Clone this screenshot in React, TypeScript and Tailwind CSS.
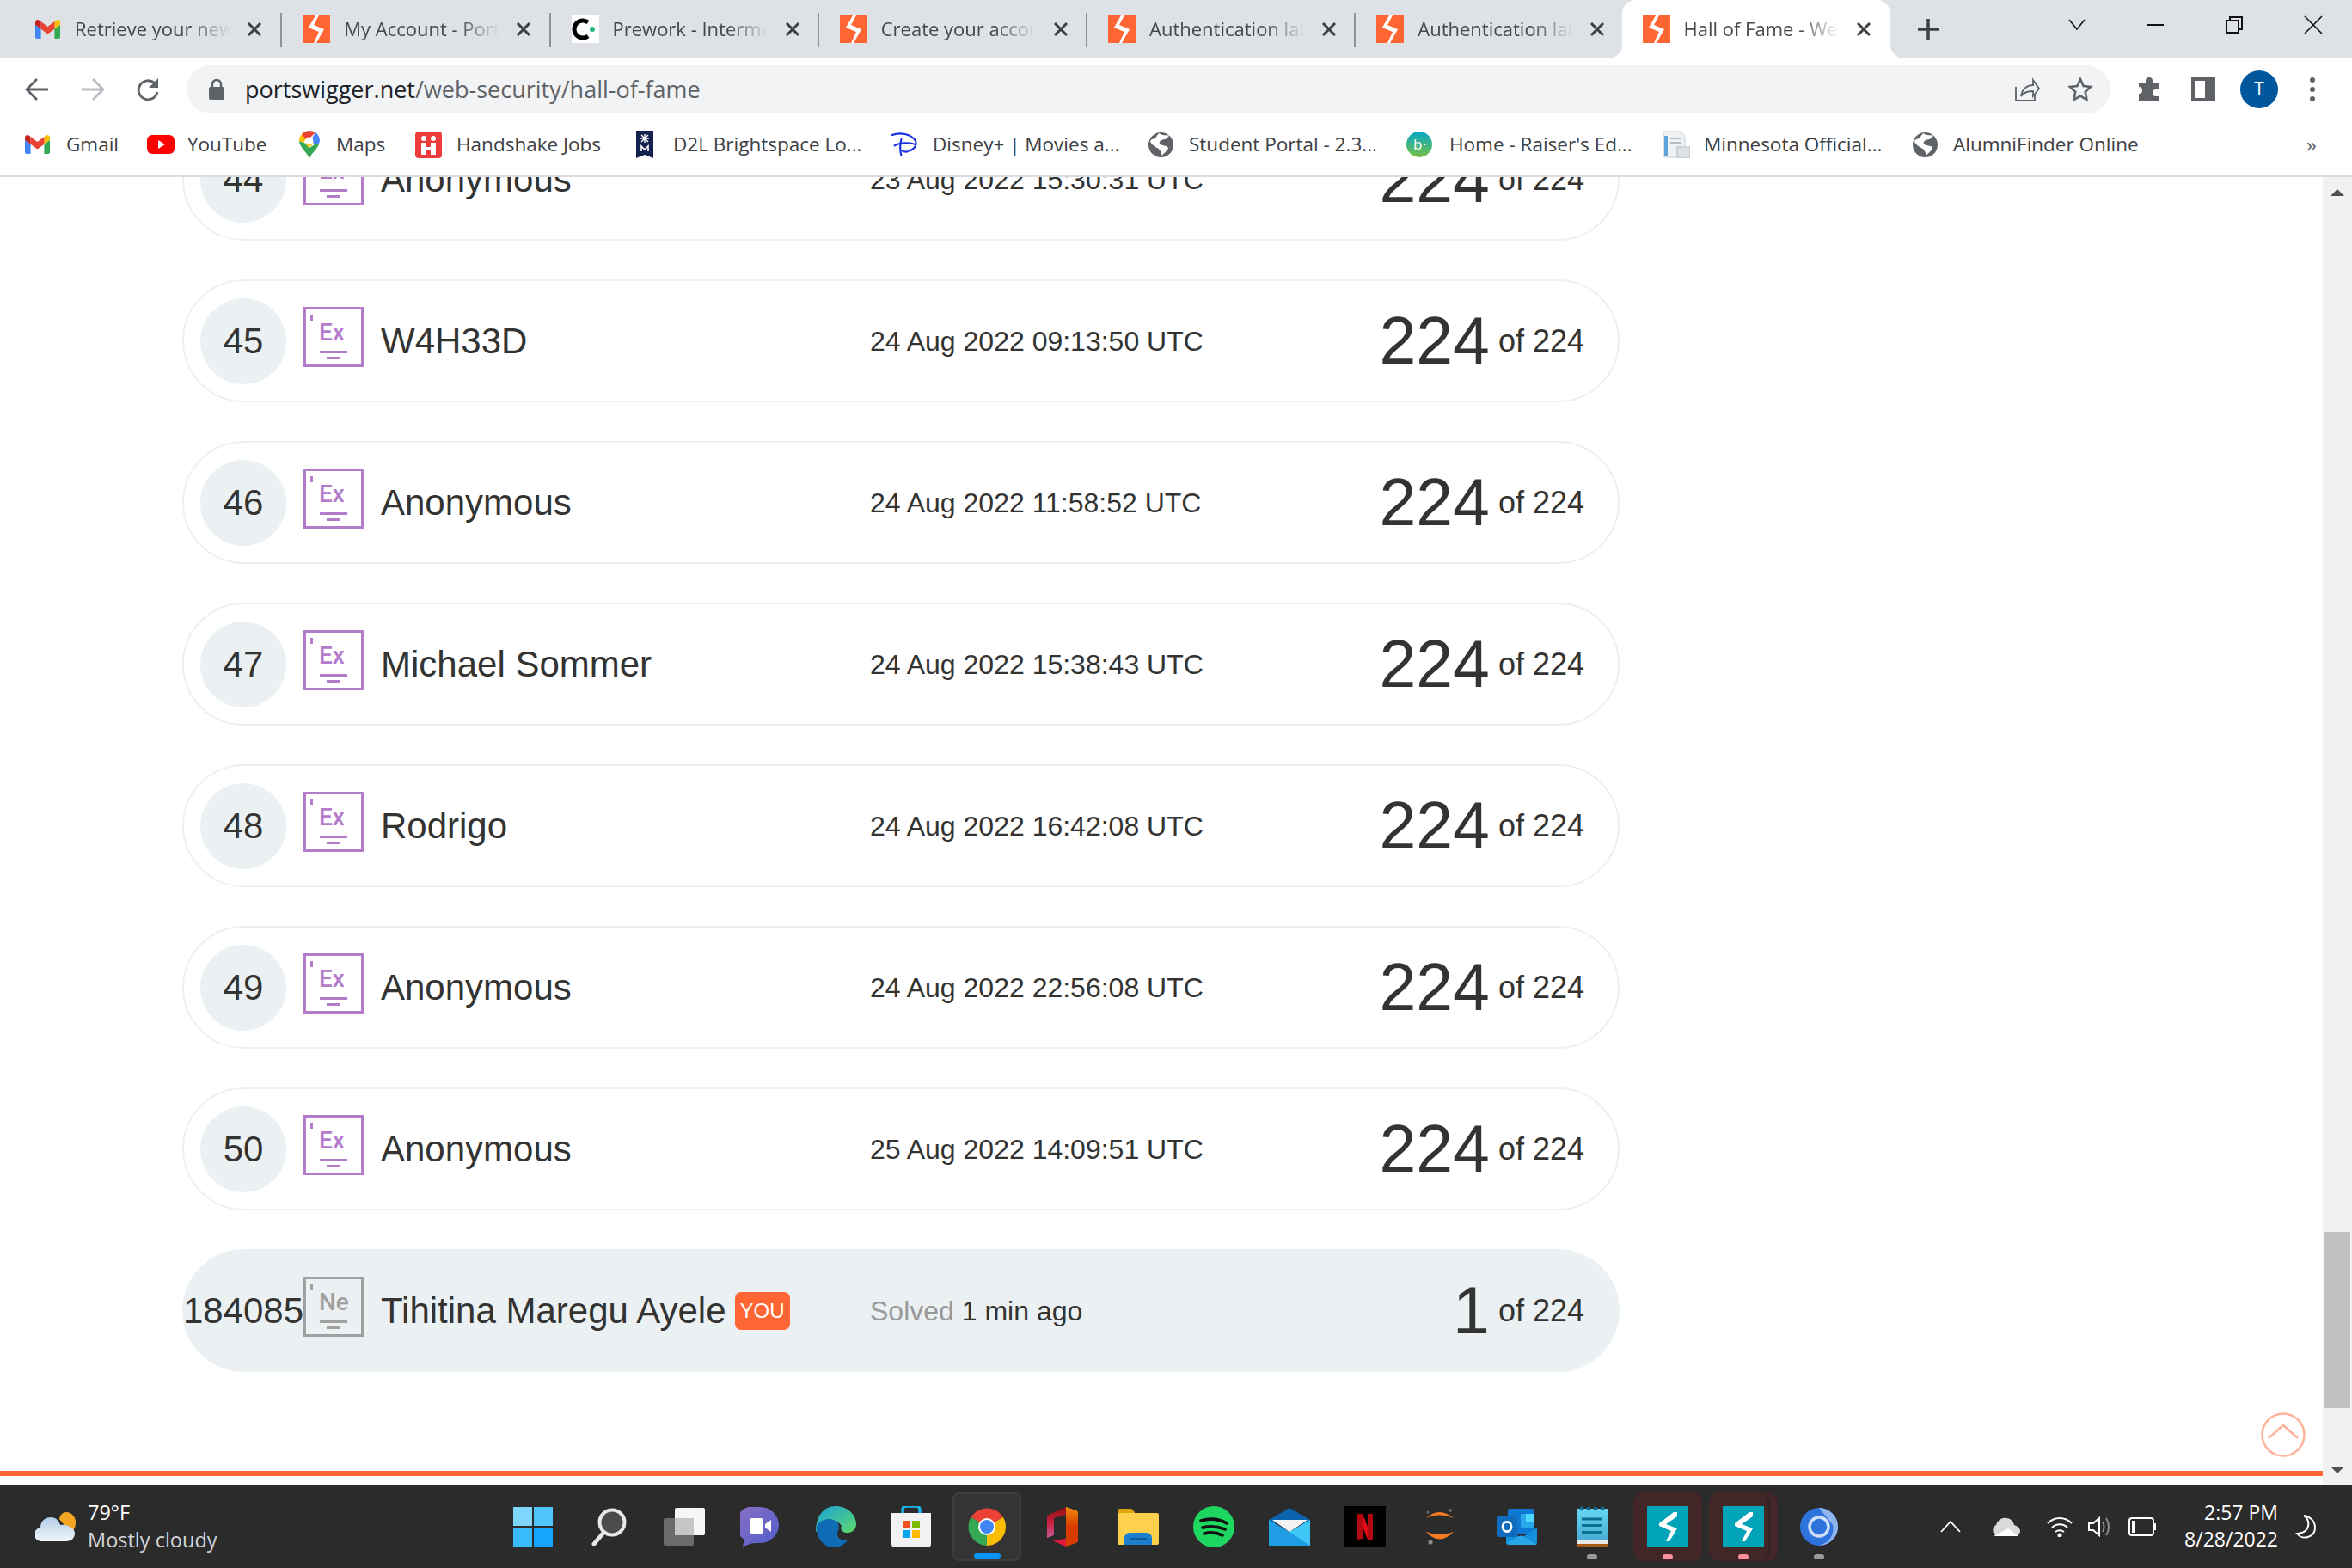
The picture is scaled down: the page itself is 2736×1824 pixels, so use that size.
import type { ReactNode } from 'react';

const uiFont = "font-['Open_Sans',sans-serif]";
const rowFont = "font-['Liberation_Sans',Arial,sans-serif]";

function BurpFavicon() {
    return (
        <svg viewBox="0 0 32 32" className="h-[32px] w-[32px] shrink-0">
            <rect width="32" height="32" fill="#ff6633" />
            <path d="M15 0h4l-6 11 12 5-9 16h-3l6-13-12-5z" fill="#fff" />
        </svg>
    );
}

function GmailLogo({ className }: { className: string }) {
    return (
        <svg viewBox="52 42 88 66" className={className}>
            <path fill="#4285f4" d="M58 108h14V74L52 59v43c0 3.32 2.69 6 6 6" />
            <path fill="#34a853" d="M120 108h14c3.32 0 6-2.69 6-6V59l-20 15" />
            <path fill="#fbbc04" d="M120 48v26l20-15v-8c0-7.42-8.47-11.65-14.4-7.2" />
            <path fill="#ea4335" d="M72 74V48l24 18 24-18v26L96 92" />
            <path fill="#c5221f" d="M52 51v8l20 15V48l-5.6-4.2c-5.94-4.45-14.4-.22-14.4 7.2" />
        </svg>
    );
}

function CourseFavicon() {
    return (
        <svg viewBox="0 0 32 32" className="h-[32px] w-[32px] shrink-0">
            <rect width="32" height="32" fill="#fff" />
            <path d="M19 8a10 10 0 1 0 0 16" fill="none" stroke="#000" strokeWidth="5" />
            <circle cx="24" cy="16" r="3" fill="#27b57c" />
        </svg>
    );
}

function Globe({ className }: { className: string }) {
    return (
        <svg viewBox="0 0 30 30" className={className}>
            <circle cx="15" cy="15" r="15" fill="#5f6368" />
            <path d="M13 1c3 3 9 2 12 3-3 3-5 6-9 6-3 0-4 3-1 5 3 1 8 1 9 4-2 4-6 7-8 9 0-4-2-7-5-9-4-2-8-5-9-9 3-3 7-5 11-9z" fill="#fff" />
            <path d="M14 11c3-3 6-3 9-2-1 3-3 5-6 5-2 0-4-1-3-3z" fill="#5f6368" />
            <path d="M4 8c2-3 4-5 7-6-1 3-3 6-7 6z" fill="#5f6368" />
        </svg>
    );
}

const bookmarks: { label: string; icon: ReactNode; width: string; textAt: string }[] = [
    { label: 'Gmail', icon: <GmailLogo className="h-[22px] w-[29px]" />, width: 'w-[142px]', textAt: 'w-[48px]' },
    {
        label: 'YouTube',
        icon: (
            <svg viewBox="0 0 32 22" className="h-[22px] w-[32px]">
                <rect width="32" height="22" rx="6" fill="#f00" />
                <path d="M13 6l8 5-8 5z" fill="#fff" />
            </svg>
        ),
        width: 'w-[177px]',
        textAt: 'w-[47px]',
    },
    {
        label: 'Maps',
        icon: (
            <svg viewBox="0 0 24 32" className="h-[32px] w-[24px]">
                <path d="M12 32C9 25 0 19 0 12l6 2 6 6 6-4 5-1c-1 6-8 10-11 17z" fill="#34a853" />
                <path d="M0 12c0-3 1-6 3-8l5 5-3 5z" fill="#fbbc04" />
                <path d="M3 4c3-3 6-4 9-4 3 0 5 1 7 2l-7 7-4 1z" fill="#ea4335" />
                <path d="M19 2c3 2 5 6 5 10l-1 3-6 1-2-7z" fill="#4285f4" />
                <path d="M7 14l10-1-3 5-4 1z" fill="#fbbc04" />
                <circle cx="12" cy="12" r="4.5" fill="#fff" />
            </svg>
        ),
        width: 'w-[135px]',
        textAt: 'w-[43px]',
    },
    {
        label: 'Handshake Jobs',
        icon: (
            <svg viewBox="0 0 31 31" className="h-[31px] w-[31px]">
                <rect width="31" height="31" rx="4" fill="#ef3b3b" />
                <circle cx="10" cy="8" r="3" fill="#fff" />
                <circle cx="21" cy="8" r="3" fill="#fff" />
                <rect x="7" y="13" width="6" height="14" fill="#fff" />
                <rect x="18" y="13" width="6" height="14" fill="#fff" />
                <rect x="12" y="18" width="8" height="3" fill="#fff" />
            </svg>
        ),
        width: 'w-[257px]',
        textAt: 'w-[48px]',
    },
    {
        label: 'D2L Brightspace Lo...',
        icon: (
            <svg viewBox="0 0 20 32" className="h-[32px] w-[20px]">
                <path d="M0 0h20v32l-10-4-10 4z" fill="#14214f" />
                <path d="M10 4v10M5 9h10M6 5l8 8M14 5l-8 8" stroke="#fff" strokeWidth="1.4" />
                <path d="M6 24v-6l4 4 4-4v6" fill="none" stroke="#fff" strokeWidth="1.6" />
            </svg>
        ),
        width: 'w-[295px]',
        textAt: 'w-[43px]',
    },
    {
        label: 'Disney+ | Movies a...',
        icon: (
            <svg viewBox="0 0 36 32" className="h-[32px] w-[35px]" fill="none" stroke="#1a2fe0" strokeWidth="2.2">
                <path d="M2 5c10-4 24-2 29 7 2 6-3 11-9 12" />
                <path d="M14 9c-2 7-2 14 0 21" />
                <path d="M5 18c6-4 18-5 26-2" />
                <path d="M14 23c3 2 5 3 8 1" />
            </svg>
        ),
        width: 'w-[301px]',
        textAt: 'w-[50px]',
    },
    { label: 'Student Portal - 2.3...', icon: <Globe className="h-[29px] w-[29px]" />, width: 'w-[300px]', textAt: 'w-[47px]' },
    {
        label: "Home - Raiser's Ed...",
        icon: (
            <svg viewBox="0 0 30 30" className="h-[30px] w-[30px]">
                <defs>
                    <linearGradient id="raiser" x1="0" y1="0" x2="0" y2="1">
                        <stop offset="0" stopColor="#05a6c9" />
                        <stop offset="1" stopColor="#78c043" />
                    </linearGradient>
                </defs>
                <circle cx="15" cy="15" r="15" fill="url(#raiser)" />
                <text x="8" y="21" fontSize="17" fill="#fff" fontFamily="Open Sans">b</text>
                <path d="M20 13l3 2-3 2z" fill="#fff" />
            </svg>
        ),
        width: 'w-[298px]',
        textAt: 'w-[50px]',
    },
    {
        label: 'Minnesota Official...',
        icon: (
            <svg viewBox="0 0 32 32" className="h-[32px] w-[32px]">
                <path d="M1 1h20l5 5v25H1z" fill="#eef1f4" stroke="#c9ced3" />
                <rect x="2" y="6" width="4" height="24" fill="#5ba5dc" />
                <rect x="9" y="8" width="12" height="2" fill="#b6bcc3" />
                <rect x="9" y="13" width="12" height="2" fill="#b6bcc3" />
                <rect x="17" y="19" width="15" height="13" fill="#dde1e5" stroke="#b6bcc3" />
            </svg>
        ),
        width: 'w-[291px]',
        textAt: 'w-[48px]',
    },
    { label: 'AlumniFinder Online', icon: <Globe className="h-[29px] w-[29px]" />, width: 'w-[300px]', textAt: 'w-[47px]' },
];

const tabs: { title: string; icon: ReactNode }[] = [
    { title: 'Retrieve your new password', icon: <GmailLogo className="h-[22px] w-[29px] shrink-0 mx-px" /> },
    { title: 'My Account - PortSwigger', icon: <BurpFavicon /> },
    { title: 'Prework - Intermediate Cyber', icon: <CourseFavicon /> },
    { title: 'Create your account', icon: <BurpFavicon /> },
    { title: 'Authentication lab', icon: <BurpFavicon /> },
    { title: 'Authentication lab', icon: <BurpFavicon /> },
];

function CloseX() {
    return (
        <svg viewBox="0 0 18 18" className="ml-[16px] h-[18px] w-[18px] shrink-0" stroke="#3c4043" strokeWidth="3">
            <path d="M2 2l14 14M16 2L2 16" />
        </svg>
    );
}

function Tab({ title, icon, active, noDivider }: { title: string; icon: ReactNode; active?: boolean; noDivider?: boolean }) {
    return (
        <div className={`relative flex h-[68px] shrink-0 items-center pl-[24px] ${active ? '-ml-[3px] w-[312px] rounded-t-[16px] bg-white' : 'w-[312.25px]'}`}>
            {active && (
                <>
                    <div className="absolute -left-[16px] bottom-0 h-[16px] w-[16px] bg-white">
                        <div className="h-full w-full rounded-br-[16px] bg-[#dee1e6]" />
                    </div>
                    <div className="absolute -right-[16px] bottom-0 h-[16px] w-[16px] bg-white">
                        <div className="h-full w-full rounded-bl-[16px] bg-[#dee1e6]" />
                    </div>
                </>
            )}
            {icon}
            <div className="ml-[16px] w-[184px] shrink-0 overflow-hidden whitespace-nowrap pb-[2px] text-[22px] text-[#45494d] [mask-image:linear-gradient(to_right,black_72%,transparent_98%)]">
                {title}
            </div>
            <CloseX />
            {!active && !noDivider && <div className="absolute right-0 top-[15px] h-[40px] w-[2px] bg-[#8f9398]" />}
        </div>
    );
}

function TopBars() {
    return (
        <div className={`${uiFont} shrink-0`}>
            <div className="flex h-[68px] items-center bg-[#dee1e6] pl-[16px]">
                {tabs.map((t, i) => (
                    <Tab key={i} title={t.title} icon={t.icon} noDivider={i === tabs.length - 1} />
                ))}
                <Tab title="Hall of Fame - Web Security" icon={<BurpFavicon />} active />
                <svg viewBox="0 0 24 24" className="ml-[32px] h-[24px] w-[24px] shrink-0" stroke="#3c4043" strokeWidth="3.5">
                    <path d="M12 0v24M0 12h24" />
                </svg>
                <svg viewBox="0 0 20 14" className="ml-[151px] -mt-[10px] h-[14px] w-[20px] shrink-0" fill="none" stroke="#111" strokeWidth="1.6">
                    <path d="M1 1l9 11 9-11" />
                </svg>
                <div className="ml-[71px] -mt-[10px] h-[2px] w-[20px] shrink-0 bg-[#111]" />
                <svg viewBox="0 0 20 20" className="ml-[72px] -mt-[10px] h-[20px] w-[20px] shrink-0" fill="none" stroke="#111" strokeWidth="2">
                    <path d="M1 5h14v14H1zM5 5V1h14v14h-4" />
                </svg>
                <svg viewBox="0 0 22 22" className="ml-[71px] -mt-[10px] h-[22px] w-[22px] shrink-0" stroke="#111" strokeWidth="1.6">
                    <path d="M1 1l20 20M21 1L1 21" />
                </svg>
            </div>

            <div className="flex h-[72px] items-center bg-white pl-[29px]">
                <svg viewBox="0 0 28 28" className="h-[28px] w-[28px] shrink-0" fill="none" stroke="#5f6368" strokeWidth="2.8">
                    <path d="M27 14H2M14 2L2 14l12 12" />
                </svg>
                <svg viewBox="0 0 28 28" className="ml-[37px] h-[28px] w-[28px] shrink-0" fill="none" stroke="#b9bcc0" strokeWidth="2.8">
                    <path d="M1 14h25M14 2l12 12-12 12" />
                </svg>
                <svg viewBox="0 0 28 28" className="ml-[37px] h-[28px] w-[28px] shrink-0" fill="none" stroke="#5f6368" strokeWidth="2.8">
                    <path d="M24 17a11 11 0 1 1-3-10" />
                    <path d="M25 1v11H14z" fill="#5f6368" stroke="none" />
                </svg>
                <div className="ml-[30px] flex h-[56px] w-[2238px] shrink-0 items-center rounded-full bg-[#f1f3f4] pl-[26px] pr-[20px]">
                    <svg viewBox="0 0 18 24" className="h-[24px] w-[18px] shrink-0">
                        <rect y="9" width="18" height="15" rx="2" fill="#5f6368" />
                        <path d="M4 10V6a5 5 0 0 1 10 0v4" fill="none" stroke="#5f6368" strokeWidth="2.4" />
                    </svg>
                    <div className="ml-[24px] flex-1 whitespace-nowrap text-[27px] text-[#5f6368]">
                        <span className="text-[#202124]">portswigger.net</span>/web-security/hall-of-fame
                    </div>
                    <svg viewBox="0 0 30 30" className="h-[30px] w-[30px] shrink-0" fill="none" stroke="#5f6368" strokeWidth="1.8">
                        <path d="M2 12v16h22v-6" />
                        <path d="M8 23c1-8 7-13 14-13V4l7 10-7 9v-6c-6 0-11 1-14 6z" />
                    </svg>
                    <svg viewBox="0 0 30 30" className="ml-[32px] h-[30px] w-[30px] shrink-0" fill="none" stroke="#5f6368" strokeWidth="2.6">
                        <path d="M15 3l3.6 8 8.4 1-6.2 5.8L22.4 27 15 22.6 7.6 27l1.6-9.2L3 12l8.4-1z" />
                    </svg>
                </div>
                <svg viewBox="0 0 30 30" className="ml-[30px] h-[30px] w-[30px] shrink-0" fill="#5f6368">
                    <path d="M11 5a4 4 0 0 1 8 0v3h7v7h-3a4 4 0 0 0 0 8h3v5H3v-8a4 4 0 0 0 0-8V8h8z" />
                </svg>
                <div className="ml-[34px] h-[28px] w-[28px] shrink-0 border-[4px] border-r-[12px] border-[#5f6368] bg-white" />
                <div className="ml-[29px] flex h-[44px] w-[44px] shrink-0 items-center justify-center rounded-full bg-[#01579b] text-[21px] text-white">
                    T
                </div>
                <div className="ml-[37px] flex shrink-0 flex-col gap-[5px]">
                    <div className="h-[6px] w-[6px] rounded-full bg-[#5f6368]" />
                    <div className="h-[6px] w-[6px] rounded-full bg-[#5f6368]" />
                    <div className="h-[6px] w-[6px] rounded-full bg-[#5f6368]" />
                </div>
            </div>

            <div className="flex h-[66px] items-center border-b-[2px] border-[#dadce0] bg-white pb-[8px] pl-[29px]">
                {bookmarks.map((b) => (
                    <div key={b.label} className={`flex shrink-0 items-center ${b.width}`}>
                        <div className={`flex shrink-0 items-center ${b.textAt}`}>{b.icon}</div>
                        <span className="whitespace-nowrap text-[22.5px] text-[#3c4043]">{b.label}</span>
                    </div>
                ))}
                <span className="ml-[158px] text-[24px] text-[#5f6368]">»</span>
            </div>
        </div>
    );
}

function LabIcon({ symbol, tone }: { symbol: string; tone: 'purple' | 'grey' }) {
    const purple = tone === 'purple';
    return (
        <div className={`relative -mt-[9px] h-[70px] w-[70px] shrink-0 border-[3px] pl-[15px] pt-[13px] ${purple ? 'border-[#b57bcb] text-[#b57bcb]' : 'border-[#a0a0a0] text-[#a0a0a0]'}`}>
            <div className={`absolute left-[5px] top-[6px] h-[7px] w-[3px] ${purple ? 'bg-[#b57bcb]' : 'bg-[#a0a0a0]'}`} />
            <div className="font-['Roboto',sans-serif] text-[28px] font-medium leading-[28px]">{symbol}</div>
            <div className={`ml-[1px] mt-[7px] h-[3px] w-[32px] ${purple ? 'bg-[#b57bcb]' : 'bg-[#a0a0a0]'}`} />
            <div className={`ml-[9px] mt-[4px] h-[3px] w-[16px] ${purple ? 'bg-[#b57bcb]' : 'bg-[#a0a0a0]'}`} />
        </div>
    );
}

const finishers = [
    { rank: 44, name: 'Anonymous', date: '23 Aug 2022 15:30:31 UTC' },
    { rank: 45, name: 'W4H33D', date: '24 Aug 2022 09:13:50 UTC' },
    { rank: 46, name: 'Anonymous', date: '24 Aug 2022 11:58:52 UTC' },
    { rank: 47, name: 'Michael Sommer', date: '24 Aug 2022 15:38:43 UTC' },
    { rank: 48, name: 'Rodrigo', date: '24 Aug 2022 16:42:08 UTC' },
    { rank: 49, name: 'Anonymous', date: '24 Aug 2022 22:56:08 UTC' },
    { rank: 50, name: 'Anonymous', date: '25 Aug 2022 14:09:51 UTC' },
];

function Score({ value }: { value: number }) {
    return (
        <div className="flex flex-1 items-center justify-end">
            <span className="text-[77px] leading-none">{value}</span>
            <span className="ml-[10px] text-[36px]">of 224</span>
        </div>
    );
}

function HallRow({ rank, name, date }: { rank: number; name: string; date: string }) {
    return (
        <div className="flex h-[143px] w-[1672px] shrink-0 items-center rounded-[72px] border-[2px] border-[#ebf0f2] pl-[19px] pr-[39px]">
            <div className="flex h-[100px] w-[100px] shrink-0 items-center justify-center rounded-full bg-[#ebf0f2] text-[42px]">{rank}</div>
            <div className="ml-[20px]">
                <LabIcon symbol="Ex" tone="purple" />
            </div>
            <div className="ml-[20px] w-[569px] shrink-0 text-[42px]">{name}</div>
            <div className="text-[32px]">{date}</div>
            <Score value={224} />
        </div>
    );
}

function YouRow() {
    return (
        <div className="flex h-[143px] w-[1672px] shrink-0 items-center rounded-[72px] bg-[#ebf0f2] pl-[21px] pr-[41px]">
            <div className="flex h-[100px] w-[100px] shrink-0 items-center justify-center text-[42px]">184085</div>
            <div className="ml-[20px]">
                <LabIcon symbol="Ne" tone="grey" />
            </div>
            <div className="ml-[20px] flex w-[569px] shrink-0 items-center text-[42px]">
                Tihitina Maregu Ayele
                <span className="ml-[10px] flex h-[44px] w-[64px] items-center justify-center rounded-[7px] bg-[#ff6633] text-[24px] text-white">YOU</span>
            </div>
            <div className="text-[32px] text-[#999]">
                Solved <span className="text-[#333332]">1 min ago</span>
            </div>
            <Score value={1} />
        </div>
    );
}

function PageContent() {
    return (
        <div className={`relative flex min-w-0 flex-1 flex-col overflow-hidden bg-white text-[#333332] ${rowFont}`}>
            <div className="-mt-[69px] flex flex-col gap-[45px] pl-[212px]">
                {finishers.map((f) => (
                    <HallRow key={f.rank} {...f} />
                ))}
                <YouRow />
            </div>
            <div className="mb-[11px] mt-auto h-[6px] shrink-0 bg-[#ff6633]" />
            <svg viewBox="0 0 52 52" className="absolute bottom-[33px] right-[20px] h-[52px] w-[52px]" fill="none" stroke="#ffb299" strokeWidth="2.5">
                <circle cx="26" cy="26" r="24.5" />
                <path d="M9 30l17-15 17 15" />
            </svg>
        </div>
    );
}

function Scrollbar() {
    return (
        <div className="flex w-[34px] shrink-0 flex-col items-center bg-[#f1f1f1]">
            <div className="mt-[14px] h-0 w-0 border-x-[8px] border-b-[8px] border-x-transparent border-b-[#505050]" />
            <div className="mt-[1205px] h-[205px] w-[30px] bg-[#c1c1c1]" />
            <div className="mt-[68px] h-0 w-0 border-x-[8px] border-t-[8px] border-x-transparent border-t-[#505050]" />
        </div>
    );
}

function WeatherIcon() {
    return (
        <svg viewBox="0 0 47 34" className="h-[34px] w-[47px] shrink-0">
            <defs>
                <linearGradient id="cloud" x1="0" y1="0" x2="0" y2="1">
                    <stop offset="0" stopColor="#b3cbe8" />
                    <stop offset="1" stopColor="#f0f5fa" />
                </linearGradient>
            </defs>
            <path d="M36 0a11 12 0 0 1 11 12c0 5-2 10-6 12L28 8c1-5 4-8 8-8z" fill="#f5a623" />
            <path d="M8 34a8 8 0 0 1-2-16c0-8 6-12 12-12 6 0 10 4 11 9 9-1 17 4 17 10 0 5-4 9-10 9z" fill="url(#cloud)" />
        </svg>
    );
}

function BurpTask({ second }: { second?: boolean }) {
    return (
        <div className="relative flex h-[80px] w-[80px] items-center justify-center rounded-[12px] bg-[#432728]">
            {second && <div className="absolute left-0 top-0 h-[80px] w-[71px] rounded-[12px] border-r-[2px] border-[#2f2222]" />}
            <svg viewBox="0 0 48 48" className="relative h-[48px] w-[48px]">
                <rect width="48" height="48" fill="#00a3b8" />
                <path d="M31 7h4v5L22 21l13 5-9 15h-4l6-12-14-6v-3z" fill="#fff" />
            </svg>
        </div>
    );
}

const taskIcons: { node: ReactNode; dot?: string }[] = [
    {
        node: (
            <div className="grid h-[46px] w-[46px] grid-cols-2 gap-[2px]">
                <div className="bg-[#7fd6fb]" />
                <div className="bg-[#4fc5fb]" />
                <div className="bg-[#39bbfb]" />
                <div className="bg-[#16a5fa]" />
            </div>
        ),
    },
    {
        node: (
            <svg viewBox="0 0 42 44" className="h-[44px] w-[42px]">
                <circle cx="25" cy="17" r="14.5" fill="#4b4b4b" stroke="#e8e8e8" strokeWidth="4" />
                <path d="M15 29L4 42" stroke="#e8e8e8" strokeWidth="5" strokeLinecap="round" />
            </svg>
        ),
    },
    {
        node: (
            <svg viewBox="0 0 48 44" className="h-[44px] w-[48px]">
                <rect x="13" y="0" width="35" height="32" rx="2" fill="#f6f6f6" />
                <rect x="0" y="12" width="35" height="32" rx="2" fill="#6b6b6b" />
                <rect x="13" y="12" width="22" height="20" fill="#c6c6c6" />
            </svg>
        ),
    },
    {
        node: (
            <svg viewBox="0 0 46 46" className="h-[46px] w-[46px]">
                <defs>
                    <linearGradient id="teams" x1="0" y1="0" x2="1" y2="1">
                        <stop offset="0" stopColor="#8c6fc6" />
                        <stop offset="1" stopColor="#4f5fc8" />
                    </linearGradient>
                </defs>
                <path d="M23 0a22 21 0 0 1 0 42c-6 0-10 0-14 2l-6 2 2-8A22 21 0 0 1 23 0z" fill="url(#teams)" />
                <rect x="11" y="13" width="16" height="18" rx="3" fill="#fff" />
                <path d="M29 20l7-5v14l-7-5z" fill="#fff" />
            </svg>
        ),
    },
    {
        node: (
            <svg viewBox="0 0 48 48" className="h-[48px] w-[48px]">
                <defs>
                    <linearGradient id="edgeTop" x1="0" y1="0" x2="1" y2="1">
                        <stop offset="0" stopColor="#1aa1d9" />
                        <stop offset="1" stopColor="#5ed96c" />
                    </linearGradient>
                </defs>
                <path d="M24 0c14 0 24 10 24 21 0 7-6 11-12 10-5-1-7-4-5-8-3-6-12-8-19-3-4 3-8 7-11 10C1 12 10 0 24 0z" fill="url(#edgeTop)" />
                <path d="M2 24c2-7 12-11 20-8 7 3 7 9 4 15-1 6 5 10 13 8-5 6-11 9-17 9C10 48 1 37 2 24z" fill="#0f6cb5" />
            </svg>
        ),
    },
    {
        node: (
            <svg viewBox="0 0 46 48" className="h-[48px] w-[46px]">
                <path d="M13 8V4a4 4 0 0 1 4-4h12a4 4 0 0 1 4 4v4" fill="none" stroke="#18b4ea" strokeWidth="3.5" />
                <path d="M0 8h46v36a4 4 0 0 1-4 4H4a4 4 0 0 1-4-4z" fill="#f2f2f2" />
                <rect x="13" y="17" width="9" height="9" fill="#f25022" />
                <rect x="24" y="17" width="9" height="9" fill="#7fba00" />
                <rect x="13" y="28" width="9" height="9" fill="#00a4ef" />
                <rect x="24" y="28" width="9" height="9" fill="#ffb900" />
            </svg>
        ),
    },
    {
        node: (
            <div className="relative flex h-[80px] w-[80px] items-center justify-center rounded-[8px] border-[2px] border-[#3e3e3e] bg-[#343434]">
                <svg viewBox="0 0 44 44" className="h-[44px] w-[44px]">
                    <path d="M22 22L3.5 11A22 22 0 0 1 41 11z" fill="#ea4335" />
                    <path d="M22 22L41 11A22 22 0 0 1 22 44z" fill="#fbbc04" />
                    <path d="M22 22L22 44A22 22 0 0 1 3.5 11z" fill="#34a853" />
                    <circle cx="22" cy="22" r="10" fill="#fff" />
                    <circle cx="22" cy="22" r="8" fill="#4285f4" />
                </svg>
                <div className="absolute bottom-[1px] h-[6px] w-[31px] rounded-full bg-[#0a93f5]" />
            </div>
        ),
    },
    {
        node: (
            <svg viewBox="0 0 36 46" className="h-[46px] w-[36px]">
                <defs>
                    <linearGradient id="officeRight" x1="0" y1="0" x2="0" y2="1">
                        <stop offset="0" stopColor="#ef8a0c" />
                        <stop offset="0.5" stopColor="#d83b01" />
                    </linearGradient>
                    <linearGradient id="officeLeft" x1="0" y1="0" x2="0" y2="1">
                        <stop offset="0" stopColor="#8f0f12" />
                        <stop offset="0.5" stopColor="#c8203c" />
                        <stop offset="1" stopColor="#c85a9c" />
                    </linearGradient>
                </defs>
                <path d="M22 0l12 4a3 3 0 0 1 2 3v32a3 3 0 0 1-2 3l-12 4z" fill="url(#officeRight)" />
                <path d="M22 0L2 9a3 3 0 0 0-2 3v24l8-3V13l14-4z" fill="url(#officeLeft)" />
                <path d="M6 39l16-2v9z" fill="#e3173e" />
            </svg>
        ),
    },
    {
        node: (
            <svg viewBox="0 0 48 42" className="h-[42px] w-[48px]">
                <path d="M0 3a3 3 0 0 1 3-3h13l4 4v5H0z" fill="#e0a50a" />
                <path d="M0 8c0-1 1-3 3-3h43a2 2 0 0 1 2 2v33a2 2 0 0 1-2 2H2a2 2 0 0 1-2-2z" fill="#ffd04c" />
                <path d="M8 34a6 6 0 0 1 6-6h20a6 6 0 0 1 6 6v8H8z" fill="#1b7fd0" />
                <rect x="15" y="34" width="19" height="2" fill="#0d5a98" />
            </svg>
        ),
    },
    {
        node: (
            <svg viewBox="0 0 48 48" className="h-[48px] w-[48px]">
                <circle cx="24" cy="24" r="24" fill="#1ed760" />
                <path d="M9 17c10-3 21-2 30 3M11 25c8-2 18-1 26 2M13 32c7-2 15-1 21 2" fill="none" stroke="#111" strokeWidth="3.6" strokeLinecap="round" />
            </svg>
        ),
    },
    {
        node: (
            <svg viewBox="0 0 48 44" className="h-[44px] w-[48px]">
                <path d="M24 0l24 14v4H0v-4z" fill="#0b62ad" />
                <path d="M0 14l24 14 24-14v30H0z" fill="#1f9ee6" />
                <path d="M24 28l24-14v30z" fill="#3fc8f7" />
                <path d="M4 14h41L24 28z" fill="#f4f4f4" />
            </svg>
        ),
    },
    {
        node: (
            <svg viewBox="0 0 48 48" className="h-[48px] w-[48px]">
                <rect width="48" height="48" fill="#000" />
                <path d="M15 9h6l12 30h-6z" fill="#e50914" />
                <path d="M15 9h6v29l-6 1zM27 9h6v30l-6-1z" fill="#b20710" />
            </svg>
        ),
    },
    {
        node: (
            <svg viewBox="0 0 36 42" className="h-[42px] w-[36px]">
                <path d="M1 11Q16-3 33 11 16 4 1 11z" fill="#f47b20" />
                <path d="M1 27q16 6 32 0Q16 44 1 27z" fill="#f47b20" />
                <circle cx="29" cy="2" r="2" fill="#6f6f6f" />
                <circle cx="3" cy="4" r="1.5" fill="#6f6f6f" />
                <circle cx="6" cy="39" r="2.6" fill="#8a8a8a" />
            </svg>
        ),
    },
    {
        node: (
            <svg viewBox="0 0 47 42" className="h-[42px] w-[47px]">
                <rect x="13" y="0" width="31" height="30" rx="2" fill="#0f78d4" />
                <rect x="28" y="6" width="16" height="16" fill="#28a8ea" />
                <rect x="34" y="6" width="10" height="10" fill="#50d9ff" />
                <path d="M11 23l18 11 18-12v17a3 3 0 0 1-3 3H14a3 3 0 0 1-3-3z" fill="#1490df" />
                <path d="M11 40l18-9 18 11H14z" fill="#28a8ea" />
                <rect x="0" y="9" width="24" height="24" rx="2" fill="#0f6cbd" />
                <ellipse cx="12" cy="21" rx="5" ry="5.6" fill="none" stroke="#fff" strokeWidth="2.8" />
            </svg>
        ),
    },
    {
        node: (
            <svg viewBox="0 0 36 48" className="h-[48px] w-[36px]">
                <defs>
                    <linearGradient id="pad" x1="0" y1="0" x2="0" y2="1">
                        <stop offset="0" stopColor="#66d6f4" />
                        <stop offset="1" stopColor="#48aed2" />
                    </linearGradient>
                </defs>
                <rect y="3" width="36" height="36" rx="1" fill="url(#pad)" />
                <circle cx="6" cy="3" r="2.4" fill="#0b6f93" />
                <circle cx="14" cy="3" r="2.4" fill="#0b6f93" />
                <circle cx="22" cy="3" r="2.4" fill="#0b6f93" />
                <circle cx="30" cy="3" r="2.4" fill="#0b6f93" />
                <path d="M6 15h24M6 22.5h24M6 30.5h24" stroke="#0b6f93" strokeWidth="3" />
                <rect y="39" width="36" height="5" fill="#e8e8e8" />
                <rect y="44" width="36" height="4" fill="#a65a12" />
            </svg>
        ),
        dot: 'bg-[#9a9a9a]',
    },
    { node: <BurpTask />, dot: 'bg-[#ff8f9c]' },
    { node: <BurpTask second />, dot: 'bg-[#ff8f9c]' },
    {
        node: (
            <svg viewBox="0 0 44 44" className="h-[44px] w-[44px]">
                <circle cx="22" cy="22" r="22" fill="#2f74dc" />
                <path d="M22 0a22 22 0 0 1 0 44c14-4 18-14 16-24z" fill="#8eb5ee" />
                <circle cx="22" cy="22" r="11" fill="#2f74dc" stroke="#cfe0f7" strokeWidth="3.5" />
            </svg>
        ),
        dot: 'bg-[#9a9a9a]',
    },
];

function Taskbar() {
    return (
        <div className={`flex h-[96px] shrink-0 items-center bg-[#2b2b2b] text-white ${uiFont}`}>
            <div className="flex w-[576px] shrink-0 items-center pl-[41px]">
                <WeatherIcon />
                <div className="-mt-[3px] ml-[14px] flex flex-col gap-[4px] text-[23.5px] leading-[28px]">
                    <span>79°F</span>
                    <span className="text-[#d4d4d4]">Mostly cloudy</span>
                </div>
            </div>
            {taskIcons.map((t, i) => (
                <div key={i} className="relative flex h-[80px] w-[88px] shrink-0 items-center justify-center">
                    {t.node}
                    {t.dot && <div className={`absolute bottom-[2px] h-[6px] w-[12px] rounded-full ${t.dot}`} />}
                </div>
            ))}
            <svg viewBox="0 0 24 14" className="ml-[97px] h-[14px] w-[24px] shrink-0" fill="none" stroke="#fff" strokeWidth="1.8">
                <path d="M1 13L12 1l11 12" />
            </svg>
            <svg viewBox="0 0 34 22" className="ml-[35px] h-[22px] w-[34px] shrink-0">
                <path d="M8 22a7 7 0 0 1-2-13c2-6 7-9 12-8 5 0 8 4 9 8 4 1 7 4 7 7s-3 6-7 6z" fill="#d9d9d9" />
                <path d="M3 22l17-9 12 9z" fill="#fff" />
            </svg>
            <svg viewBox="0 0 32 24" className="ml-[30px] h-[24px] w-[32px] shrink-0" fill="none" stroke="#fff" strokeWidth="2">
                <path d="M2 8c8-8 20-8 28 0M7 13c5-5 13-5 18 0M11 18c3-2 7-2 10 0" />
                <circle cx="16" cy="22" r="1.5" fill="#fff" />
            </svg>
            <svg viewBox="0 0 28 26" className="ml-[16px] h-[26px] w-[28px] shrink-0" fill="none" stroke="#fff" strokeWidth="2">
                <path d="M2 9h5l7-6v20l-7-6H2z" />
                <path d="M18 7c2 4 2 8 0 12M22 3c4 6 4 14 0 20" stroke="#8a8a8a" />
            </svg>
            <div className="ml-[20px] flex shrink-0 items-center">
                <div className="h-[22px] w-[30px] rounded-[4px] border-[2px] border-white pl-[2px] pt-[2px]">
                    <div className="h-[14px] w-[3px] bg-white" />
                </div>
                <div className="h-[8px] w-[2px] bg-white" />
            </div>
            <div className="-mt-[2px] ml-[12px] flex w-[130px] shrink-0 flex-col items-end text-[23px] leading-[31px]">
                <span>2:57 PM</span>
                <span>8/28/2022</span>
            </div>
            <svg viewBox="0 0 26 30" className="ml-[19px] h-[30px] w-[26px] shrink-0" fill="none" stroke="#fff" strokeWidth="2">
                <path d="M11 2c8 6 8 20-8 21 6 8 21 5 21-7 0-8-6-13-13-14z" />
            </svg>
        </div>
    );
}

export default function App() {
    return (
        <div className="flex h-[1824px] w-[2736px] flex-col overflow-hidden bg-white">
            <TopBars />
            <div className="flex min-h-0 flex-1">
                <PageContent />
                <Scrollbar />
            </div>
            <Taskbar />
        </div>
    );
}
